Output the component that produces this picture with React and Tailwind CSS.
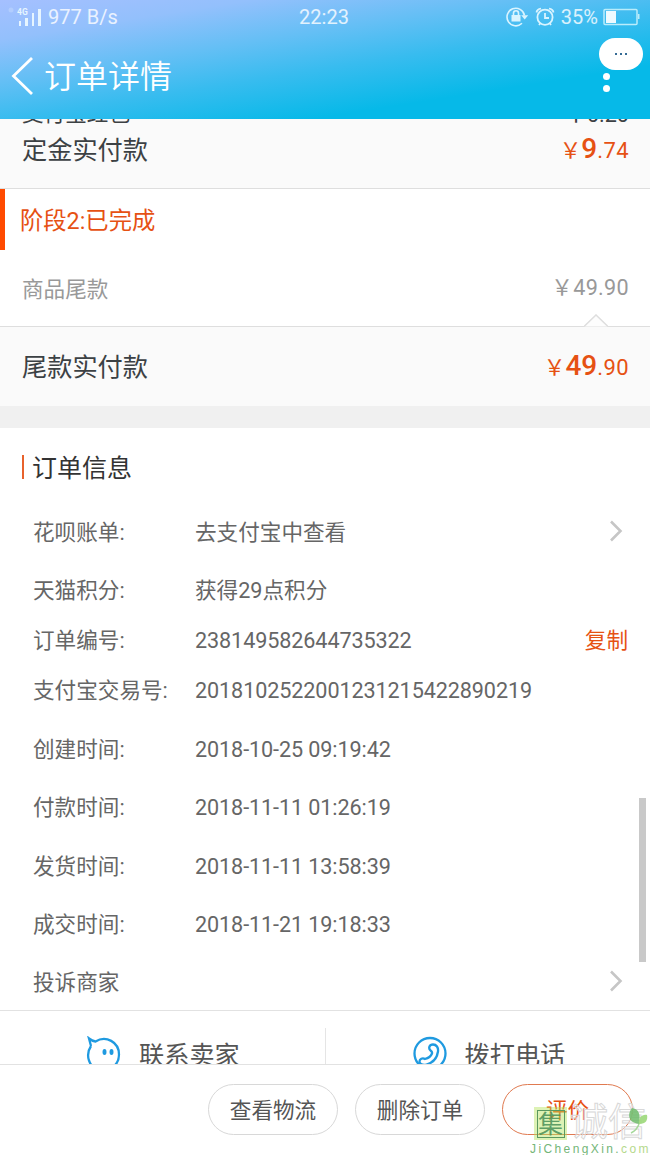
import { clsx } from 'clsx'

// fullwidth yen sign
const YEN = '\uFFE5'

const orderInfo = [
    { label: '花呗账单:', value: '去支付宝中查看', height: 'h-[59px]', arrow: true },
    { label: '天猫积分:', value: '获得29点积分', height: 'h-[58px]' },
    { label: '订单编号:', value: '238149582644735322', height: 'h-[42px]', copy: true },
    { label: '支付宝交易号:', value: '2018102522001231215422890219', height: 'h-[58px]' },
    { label: '创建时间:', value: '2018-10-25 09:19:42', height: 'h-[59px]' },
    { label: '付款时间:', value: '2018-11-11 01:26:19', height: 'h-[58px]' },
    { label: '发货时间:', value: '2018-11-11 13:58:39', height: 'h-[59px]' },
    { label: '成交时间:', value: '2018-11-21 19:18:33', height: 'h-[58px]' },
    { label: '投诉商家', value: '', height: 'h-[57px]', arrow: true },
]

function Arrow() {
    return (
        <svg width="14" height="22" viewBox="0 0 14 22" fill="none" stroke="#c6c6c6" strokeWidth="2.6" className="mb-[2px] ml-auto mr-[5px]">
            <path d="M2 1.500l9.500 9.500L2 20.500" />
        </svg>
    )
}

function StatusBar() {
    return (
        <div className="flex h-[34px] items-center pl-[10px] pr-[9px] text-[20px] text-white/80">
            <div className="-ml-[2px] flex flex-1 items-center">
                <svg width="34" height="22" viewBox="0 0 34 22" fill="#e6f5ff">
                    <circle cx="3" cy="4" r="2.5" opacity=".25" />
                    <text x="9" y="9" fontSize="8.5" fontWeight="700" fontFamily="Roboto">4G</text>
                    <rect x="11" y="15" width="2" height="5" />
                    <rect x="17" y="12" width="3" height="8" />
                    <rect x="24" y="7" width="2" height="13" />
                    <rect x="30" y="3" width="3" height="17" />
                </svg>
                <span className="ml-[6px] whitespace-nowrap">977 B/s</span>
            </div>
            <span>22:23</span>
            <div className="flex flex-1 items-center justify-end pr-[1px]">
                <svg width="23" height="22" viewBox="0 0 23 22" fill="none" stroke="#d9f4ff" strokeWidth="1.6">
                    <path d="M16 17.300A8.800 8.800 0 1 1 18.500 9.500" />
                    <path d="M15.200 9.300h7L18.700 13.500z" fill="#d9f4ff" stroke="none" />
                    <rect x="5.500" y="9" width="9" height="6.500" fill="#d9f4ff" stroke="none" />
                    <path d="M7.500 9.500V7.300a2.500 2.500 0 0 1 5 0V9.500" />
                </svg>
                <svg width="20" height="22" viewBox="0 0 20 22" fill="none" stroke="#d9f4ff" strokeWidth="1.8" className="ml-[6px]">
                    <circle cx="10" cy="11.300" r="7.600" />
                    <path d="M10 7v5h4M1.500 6.500Q2 3 6 2.600M18.500 6.500Q18 3 14 2.600M4 19l1.500-2M16 19l-1.500-2" />
                </svg>
                <span className="ml-[6px]">35%</span>
                <svg width="37" height="18" viewBox="0 0 37 18" className="ml-[5px]">
                    <rect x="1" y="1.500" width="33" height="15" rx="1" fill="none" stroke="#b9ecfb" strokeWidth="1.500" />
                    <rect x="3" y="3" width="10" height="12" fill="#eefaff" />
                    <rect x="35" y="6" width="1.500" height="5" fill="#b9ecfb" />
                </svg>
            </div>
        </div>
    )
}

function Header() {
    return (
        <header className="relative h-[119px] shrink-0 bg-[linear-gradient(171deg,#a5c0ff_0%,#93c0fc_18%,#64bff5_37%,#38bcef_54%,#06b9e8_76%)]">
            <StatusBar />
            <div className="flex h-[84px] items-center pl-[11px] text-white">
                <svg width="24" height="40" viewBox="0 0 24 40" fill="none" stroke="currentColor" strokeWidth="2.800">
                    <path d="M21 2L2.500 20 21 38" />
                </svg>
                <h1 className="ml-[9px] pt-[2px] text-[32px] font-[350] leading-none">订单详情</h1>
            </div>
            <div className="absolute right-[7px] top-[38px] flex h-8 w-11 items-center justify-center gap-[3px] rounded-full bg-white">
                <i className="size-[2px] bg-[#356b95]" />
                <i className="size-[2px] bg-[#356b95]" />
                <i className="size-[2px] bg-[#356b95]" />
            </div>
            <div className="absolute right-[40px] top-[73px] flex flex-col gap-[5px]">
                <i className="size-[7px] rounded-full bg-white" />
                <i className="size-[7px] rounded-full bg-white" />
            </div>
        </header>
    )
}

function Total({ yuan, cents }) {
    return (
        <span className="flex items-baseline pb-[2px] text-[#e65113]">
            <span className="text-[21.600px] leading-none">{YEN}</span>
            <span className="text-[28px] font-medium leading-none">{yuan}</span>
            <span className="text-[22px] leading-none tracking-[0.400px]">.{cents}</span>
        </span>
    )
}

function Payments() {
    return (
        <section>
            <div className="h-[69px] bg-[#fafafa] pl-[22px] pr-[21px]">
                <div className="flex h-[6px] items-end justify-between overflow-hidden text-[21.600px] leading-[23px] text-[#3c4144]">
                    <span>支付宝红包</span>
                    <span className="leading-[21px]">{YEN}0.20</span>
                </div>
                <div className="flex h-[50px] items-center justify-between">
                    <span className="pt-[2px] text-[25.200px] text-[#3c4144]">定金实付款</span>
                    <Total yuan="9" cents="74" />
                </div>
            </div>
            <div className="border-t border-[#dedede]">
                <div className="flex h-[61px] items-center border-l-[5px] border-[#ff4a00] pl-[15px] pt-[4px] text-[23.300px] text-[#e65113]">
                    阶段2:已完成
                </div>
            </div>
            <div className="relative flex h-[77px] items-center justify-between border-b border-[#dedede] pl-[22px] pr-[21px] text-[21.600px] text-[#999]">
                <span className="pt-[4px]">商品尾款</span>
                <span className="leading-none tracking-[0.300px]">{YEN}49.90</span>
                <svg width="24" height="13" viewBox="0 0 24 13" className="absolute -bottom-[1px] right-[42px]">
                    <path d="M0 12.500L12 1l12 11.500" fill="#fdfdfd" stroke="#dedede" strokeWidth="1.500" />
                </svg>
            </div>
            <div className="flex h-[79px] items-center justify-between bg-[#fafafa] pl-[22px] pr-[21px]">
                <span className="pt-[2px] text-[25.200px] text-[#3c4144]">尾款实付款</span>
                <Total yuan="49" cents="90" />
            </div>
        </section>
    )
}

function OrderInfo() {
    return (
        <section className="h-[583px] border-b border-[#e2e2e2] px-[22px] text-[21.600px] text-[#666]">
            <div className="flex h-[74px] items-center pt-[4px] text-[25px] text-[#333]">
                <i className="mr-[8px] h-6 w-[2px] bg-[#e8622c]" />
                <span className="pt-[3px]">订单信息</span>
            </div>
            {orderInfo.map(({ label, value, height, arrow, copy }) => (
                <div key={label} className={clsx('flex items-center pl-[11px]', height)}>
                    <span className="w-[162px] whitespace-nowrap pt-[3px]">{label}</span>
                    <span className={clsx('pt-[3px]', /^\d/.test(value) && 'tracking-[-0.100px]')}>{value}</span>
                    {arrow && <Arrow />}
                    {copy && <button className="ml-auto pt-[2px] text-[#e65113]">复制</button>}
                </div>
            ))}
        </section>
    )
}

function Contact() {
    return (
        <div className="h-[53px] overflow-hidden">
            <div className="mt-[17px] flex h-[52px] text-[25.200px] text-[#555]">
                <div className="flex flex-1 items-center border-r border-[#e5e5e5] pl-[86px]">
                    <svg width="36" height="36" viewBox="0 0 36 36" fill="none" stroke="#1f9ae0" strokeWidth="2.300">
                        <path d="M5 10L3 2.500q3 2.500 6.500 3C20-1 33 6 33 18.500S21 36 12 33.500-1 19 5 10" />
                        <ellipse cx="18.500" cy="16" rx="2" ry="3" fill="#1f9ae0" stroke="none" />
                        <ellipse cx="25.500" cy="16" rx="2" ry="3" fill="#1f9ae0" stroke="none" />
                    </svg>
                    <span className="ml-[17px] pt-[3px]">联系卖家</span>
                </div>
                <div className="flex flex-1 items-center pl-[86px]">
                    <svg width="36" height="36" viewBox="0 0 36 36" fill="none" stroke="#1f9ae0" strokeWidth="2.300">
                        <circle cx="18" cy="17.500" r="15.500" />
                        <path d="M18.500 14.500C16 12 17.500 8.500 21 8.500s5.500 3 5 7C25 22.500 20 27 14.500 28.500c-4 1-7-.5-7-3s3-4 5.500-2.500c4-1 6-3 7-5.500q.5-1.500-1.500-3z" />
                    </svg>
                    <span className="ml-[17px] pt-[3px]">拨打电话</span>
                </div>
            </div>
        </div>
    )
}

function Watermark() {
    return (
        <div className="absolute bottom-0 right-0 h-[48px] w-[120px]">
            <div className="flex items-start">
                <div className="ml-[4px] flex size-[33px] items-center justify-center bg-[#b4e35a]/45">
                    <span className="flex size-[28px] items-center justify-center border border-[#5a9860] pt-[1px] text-[25px] leading-none text-[#4e925b]/90">集</span>
                </div>
                <span className="ml-[3px] whitespace-nowrap text-[38px] leading-[31px] text-white/40 [-webkit-text-stroke:1px_#d8d8d8]">诚信</span>
            </div>
            <svg width="22" height="30" viewBox="0 0 22 30" className="absolute right-0 top-0">
                <path d="M4 1c6 1 9 5 7 16C0 16-1 7 4 1z" fill="#6dbb6a" fillOpacity=".85" />
                <path d="M11 17c-1-6 3-10 8-9 1 5-1 9-8 9z" fill="#9bd879" fillOpacity=".9" />
                <path d="M11 17q-2 6-8 9" fill="none" stroke="#a5d89a" strokeWidth="1.500" />
            </svg>
            <div className="absolute bottom-[-1px] left-0 whitespace-nowrap font-['Liberation_Sans'] text-[12px] leading-[14px] tracking-[2.400px] text-[#74b678]">
                JiChengXin.<span className="text-[#b5d98c]">com</span>
            </div>
        </div>
    )
}

export default function App() {
    return (
        <div className="relative flex h-[1155px] w-[650px] flex-col overflow-hidden bg-white font-[Roboto,'Noto_Sans_CJK_SC',sans-serif]">
            <Header />
            <Payments />
            <div className="h-[22px] bg-[#f0f0f0]" />
            <OrderInfo />
            <Contact />
            <footer className="flex h-[91px] items-center justify-end gap-[17px] border-t border-[#e2e2e2] pb-[2px] pr-[17px] text-[21.600px] text-[#555]">
                <button className="h-[51px] w-[130px] rounded-full border border-[#d8d8d8] pt-[5px]">查看物流</button>
                <button className="h-[51px] w-[130px] rounded-full border border-[#d8d8d8] pt-[5px]">删除订单</button>
                <button className="h-[51px] w-[131px] rounded-full border border-[#e07a50] pt-[5px] text-[#e65113]">评价</button>
            </footer>
            <div className="absolute right-[4px] top-[798px] h-[164px] w-[7px] bg-[#c9c9c9]" />
            <Watermark />
        </div>
    )
}
